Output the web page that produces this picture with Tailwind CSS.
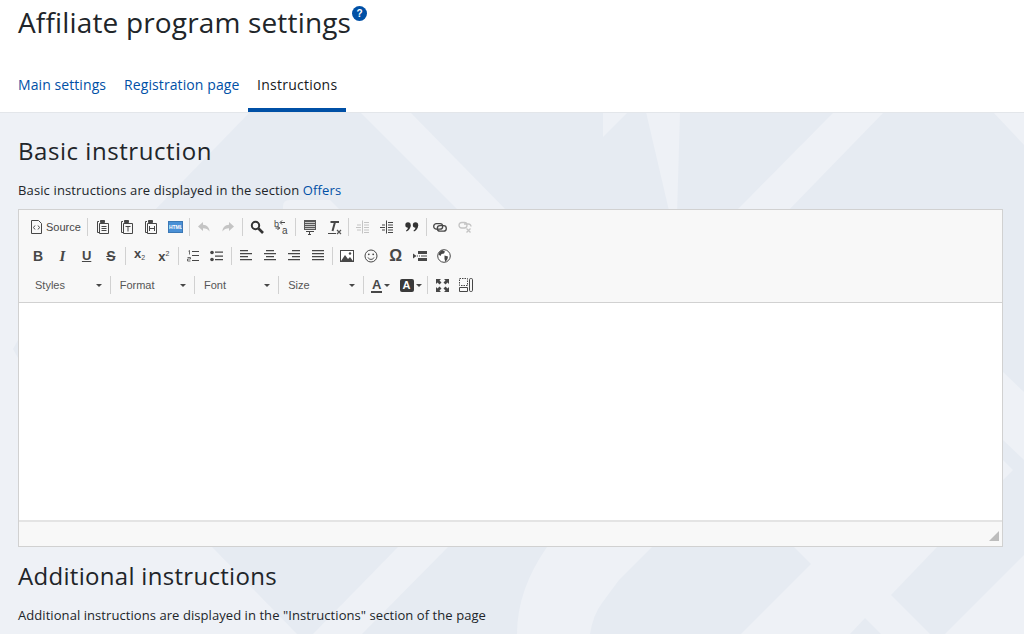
<!DOCTYPE html>
<html lang="en">
<head>
<meta charset="utf-8">
<title>Affiliate program settings</title>
<script src="https://cdn.jsdelivr.net/npm/@tailwindcss/browser@4"></script>
</head>
<body class="m-0 overflow-hidden bg-[#eef1f6] font-['Open_Sans',sans-serif] text-[#212529]">
<div class="relative w-[1024px] h-[634px] overflow-hidden">
  <svg class="absolute inset-0" width="1024" height="634" viewBox="0 0 1024 634" fill="#e6ebf2">
    <polygon points="250,112 360,112 463,215 150,215"/>
    <path d="M283 215V206Q283 200 290 200L330 200L345 215Z" fill="#eef1f6"/>
    <polygon points="410,112 603,112 603,137 628,112 646,112 670,215 511,215"/>
    <polygon points="680,112 834,112 732,215 677,215"/>
    <polygon points="884,112 993,112 1024,145 1024,392 1003,372 1003,215 784,215"/>
    <polygon points="1003,440 1024,460 1024,547 1003,547 1003,480 1013,470 1003,460"/>
    <polygon points="18,340 13,349 18,358"/>
    <polygon points="212,547 398,547 313,634 297,634"/>
    <path d="M448 547H547Q517 590 517 634H362Z"/>
    <path d="M652 547H794L811 564L741 634H590Q593 615 602 603L619 580Z"/>
    <polygon points="850,634 865,618 881,634"/>
    <polygon points="937,547 891,595 930,634 945,634 1024,555 1024,547"/>
  </svg>

  <div class="relative flex flex-col">
    <header class="h-[113px] bg-white border-b border-[#e3e6ea] flex flex-col">
      <div class="h-[68px] pl-[18px] flex items-start">
        <h1 class="text-[28px] leading-[44px] font-normal tracking-[0.16px] text-[#212529]">Affiliate program settings</h1>
        <span class="mt-[6px] ml-px w-[15px] h-[15px] rounded-full bg-[#0050a6] text-white text-[10px] leading-[15px] font-bold text-center font-['Liberation_Sans',sans-serif]">?</span>
      </div>
      <nav class="flex h-[44px] pl-[18px] text-[14px] leading-[20px]">
        <a class="w-[97px] pt-[7px] tracking-[0.08px] text-[#0050a6]">Main settings</a>
        <a class="w-[133px] pl-[9px] pt-[7px] tracking-[0.1px] text-[#0050a6]">Registration page</a>
        <a class="w-[98px] h-[44px] pl-[9px] pt-[7px] tracking-[0.25px] text-[#16191c] border-b-[4px] border-[#0050a6]">Instructions</a>
      </nav>
    </header>

    <main class="px-[18px] flex flex-col">
      <h2 class="mt-[20px] text-[24px] leading-[36px] font-normal tracking-[0.55px]">Basic instruction</h2>
      <p class="mt-[11px] text-[13px] leading-[20px] tracking-[0.13px]">Basic instructions are displayed in the section <a class="text-[#0050a6]">Offers</a></p>

      <section class="mt-[9px] w-[985px] h-[338px] border border-[#d1d1d1] flex flex-col bg-[#f8f8f8] font-['Liberation_Sans',sans-serif]">
        <div class="h-[93px] border-b border-[#d1d1d1] pl-[7px] pt-[3px] text-[#474747]">
          <!-- row 1 -->
          <div class="flex items-center h-[28px]">
            <div class="w-[59px] h-6 flex items-center pl-[4px] gap-[2px] text-[11px] text-[#474747]">
              <svg width="13" height="14" viewBox="0 0 13 14" fill="none" stroke="#474747"><path d="M1.500.5h7l3 3v10h-10z"/><path d="M5 5.500 3.500 7.500 5 9.500M8 5.500 9.500 7.500 8 9.500" stroke-width="1"/></svg>
              <span class="ml-[1px]">Source</span>
            </div>
            <div class="w-[5.5px] flex justify-center"><i class="block w-px h-[18px] bg-[#d1d1d1]"></i></div>
            <div class="w-[24.25px] flex justify-center"><svg width="14" height="16" viewBox="0 0 14 16" fill="none" stroke="#474747"><path d="M3 2.500H1.500V13.500H3"/><path d="M4.500 1.500h4v2h-4z" fill="#474747"/><path d="M3.500 4.500h9v10h-9z"/><path d="M5.500 7.500h5M5.500 9.500h5M5.500 11.500h5"/></svg></div>
            <div class="w-[24.25px] flex justify-center"><svg width="14" height="16" viewBox="0 0 14 16" fill="none" stroke="#474747"><path d="M3 2.500H1.500V13.500H3"/><path d="M4.500 1.500h4v2h-4z" fill="#474747"/><path d="M3.500 4.500h9v10h-9z"/><path d="M5.500 7.500h5M8 7.500v5"/></svg></div>
            <div class="w-[24.25px] flex justify-center"><svg width="14" height="16" viewBox="0 0 14 16" fill="none" stroke="#474747"><path d="M3 2.500H1.500V13.500H3"/><path d="M4.500 1.500h4v2h-4z" fill="#474747"/><path d="M3.500 4.500h9v10h-9z"/><path d="M5.500 7v5M10.500 7v5M5.500 9.500h5"/></svg></div>
            <div class="w-[24.25px] flex justify-center"><div class="w-[15px] h-[12px] bg-[#4a90d6] border border-[#3b78b5] text-white text-[5px] leading-[10px] font-bold text-center overflow-hidden">HTML</div></div>
            <div class="w-[4.5px] flex justify-center"><i class="block w-px h-[18px] bg-[#d1d1d1]"></i></div>
            <div class="w-[24.25px] flex justify-center"><svg width="14" height="12" viewBox="0 0 14 12" fill="#c4c4c4"><path d="M6 1 1 5.500 6 10V7.200C9 7.200 11 8 12.500 10.500 12.500 6.500 10 3.800 6 3.700z"/></svg></div>
            <div class="w-[24.25px] flex justify-center"><svg width="14" height="12" viewBox="0 0 14 12" fill="#c4c4c4"><path d="M8 1 13 5.500 8 10V7.200C5 7.200 3 8 1.500 10.500 1.500 6.500 4 3.800 8 3.700z"/></svg></div>
            <div class="w-[4.5px] flex justify-center"><i class="block w-px h-[18px] bg-[#d1d1d1]"></i></div>
            <div class="w-[24.25px] flex justify-center"><svg width="14" height="14" viewBox="0 0 14 14" fill="none" stroke="#333"><circle cx="5.500" cy="5.500" r="3.700" stroke-width="2"/><path d="M8.500 8.500 13 13" stroke-width="2.600"/></svg></div>
            <div class="w-[24.25px] flex justify-center"><svg width="16" height="16" viewBox="0 0 16 16" fill="none" stroke="#474747"><text x="1" y="7.500" font-size="9" font-family="Liberation Sans" fill="#474747" stroke="none">b</text><path d="M7.500 3.500H12M9 1.500 7 3.500 9 5.500"/><path d="M7 9H2.500M4.500 7 6.500 9 4.500 11"/><text x="9" y="14.500" font-size="10" font-family="Liberation Sans" fill="#474747" stroke="none">a</text></svg></div>
            <div class="w-[4.5px] flex justify-center"><i class="block w-px h-[18px] bg-[#d1d1d1]"></i></div>
            <div class="w-[24.25px] flex justify-center"><svg width="14" height="16" viewBox="0 0 14 16"><rect x="1" y="1" width="12" height="10" fill="#595959"/><path d="M2 3.500h10M2 5.500h10M2 7.500h10M2 9.500h10" stroke="#c9c9c9"/><path d="M3 12.500h8" stroke="#474747"/><path d="M6.500 12v3M5 15.500h3" stroke="#474747"/></svg></div>
            <div class="w-[24.25px] flex justify-center"><svg width="15" height="15" viewBox="0 0 15 15" fill="none"><path d="M3.500 2h8.500M8 2 5.500 11" stroke="#474747" stroke-width="2"/><path d="M1 13.500h8" stroke="#474747"/><path d="M10 10l4 4M14 10l-4 4" stroke="#555" stroke-width="1.200"/></svg></div>
            <div class="w-[4.5px] flex justify-center"><i class="block w-px h-[18px] bg-[#d1d1d1]"></i></div>
            <div class="w-[24.25px] flex justify-center"><svg width="14" height="14" viewBox="0 0 14 14" fill="none" stroke="#c4c4c4"><path d="M6.500 .5v13M8 2.500h5M8 5h5M8 7.500h5M8 10h5M8 12.500h5M1 5h4M0 7.500h5M1 10h4"/></svg></div>
            <div class="w-[24.25px] flex justify-center"><svg width="14" height="14" viewBox="0 0 14 14" fill="none" stroke="#474747"><path d="M6.500 .5v13M8 2.500h5M8 5h5M8 7.500h5M8 10h5M8 12.500h5M2 5h3M0 7.500h5M2 10h3"/></svg></div>
            <div class="w-[24.25px] flex justify-center"><svg width="14" height="10" viewBox="0 0 14 10" fill="#333"><circle cx="3" cy="3" r="2.700"/><path d="M5.700 3C5.700 6 4 8.500 1.500 9.500L1 8.500C2.500 7.500 3 6.500 3 5z"/><circle cx="10.500" cy="3" r="2.700"/><path d="M13.200 3C13.200 6 11.500 8.500 9 9.500L8.500 8.500C10 7.500 10.500 6.500 10.500 5z"/></svg></div>
            <div class="w-[4.5px] flex justify-center"><i class="block w-px h-[18px] bg-[#d1d1d1]"></i></div>
            <div class="w-[24.25px] flex justify-center"><svg width="14" height="9" viewBox="0 0 14 9" fill="none" stroke="#474747" stroke-width="1.300"><rect x=".7" y=".7" width="9" height="5.500" rx="2.700"/><rect x="4.300" y="2.700" width="9" height="5.500" rx="2.700"/></svg></div>
            <div class="w-[24.25px] flex justify-center"><svg width="14" height="12" viewBox="0 0 14 12" fill="none" stroke="#c4c4c4" stroke-width="1.300"><rect x="1" y="1.500" width="8" height="5.500" rx="2.700"/><path d="M6 3H10.500A2.500 2.500 0 0 1 13 5.500"/><path d="M8.500 7.500l4 4M12.500 7.500l-4 4"/></svg></div>
          </div>
          <!-- row 2 -->
          <div class="flex items-center h-[29px]">
            <div class="w-[24.25px] text-center text-[14px] leading-6 font-bold text-[#474747]">B</div>
            <div class="w-[24.25px] text-center text-[15px] leading-6 font-bold italic font-['Liberation_Serif',serif] text-[#474747]">I</div>
            <div class="w-[24.25px] text-center text-[13px] leading-[18px] font-bold underline text-[#474747]">U</div>
            <div class="w-[24.25px] text-center text-[14px] leading-6 font-bold line-through text-[#474747]">S</div>
            <div class="w-[4.5px] flex justify-center"><i class="block w-px h-[18px] bg-[#d1d1d1]"></i></div>
            <div class="w-[24.25px] text-center text-[13px] leading-6 font-bold text-[#474747]">x<span class="text-[7px] font-normal align-[-2px]">2</span></div>
            <div class="w-[24.25px] text-center text-[13px] leading-6 font-bold text-[#474747]">x<span class="text-[7px] font-normal align-[5px]">2</span></div>
            <div class="w-[4.5px] flex justify-center"><i class="block w-px h-[18px] bg-[#d1d1d1]"></i></div>
            <div class="w-[24.25px] flex justify-center"><svg width="12" height="12" viewBox="0 0 12 12" fill="none" stroke="#474747"><path d="M2.500 .5v4M1.500 1.200 2.500 .5M.5 7.500h3v1.500h-3v2h3" stroke-width=".8"/><path d="M5 1.500h7M5 5.500h7M5 10.500h7"/></svg></div>
            <div class="w-[24.25px] flex justify-center"><svg width="13" height="12" viewBox="0 0 13 12" fill="#474747"><circle cx="2" cy="2.500" r="1.800"/><circle cx="2" cy="9.500" r="1.800"/><path d="M5 1.500h8v1.200H5zM5 5.500h8v1.200H5zM5 9h8v1.200H5z"/></svg></div>
            <div class="w-[4.5px] flex justify-center"><i class="block w-px h-[18px] bg-[#d1d1d1]"></i></div>
            <div class="w-[24.25px] flex justify-center"><svg width="12" height="11" viewBox="0 0 12 11" fill="#474747"><path d="M0 0h8v1.300H0zM0 3h12v1.300H0zM0 6h8v1.300H0zM0 9h12v1.300H0z"/></svg></div>
            <div class="w-[24.25px] flex justify-center"><svg width="12" height="11" viewBox="0 0 12 11" fill="#474747"><path d="M2 0h8v1.300H2zM0 3h12v1.300H0zM2 6h8v1.300H2zM0 9h12v1.300H0z"/></svg></div>
            <div class="w-[24.25px] flex justify-center"><svg width="12" height="11" viewBox="0 0 12 11" fill="#474747"><path d="M4 0h8v1.300H4zM0 3h12v1.300H0zM4 6h8v1.300H4zM0 9h12v1.300H0z"/></svg></div>
            <div class="w-[24.25px] flex justify-center"><svg width="12" height="11" viewBox="0 0 12 11" fill="#474747"><path d="M0 0h12v1.300H0zM0 3h12v1.300H0zM0 6h12v1.300H0zM0 9h12v1.300H0z"/></svg></div>
            <div class="w-[4.5px] flex justify-center"><i class="block w-px h-[18px] bg-[#d1d1d1]"></i></div>
            <div class="w-[24.25px] flex justify-center"><svg width="14" height="12" viewBox="0 0 14 12"><rect x=".5" y=".5" width="13" height="11" fill="#fff" stroke="#474747"/><path d="M1 11 5 5l3 4 2-2 3 4z" fill="#474747"/><circle cx="10" cy="3.500" r="1.200" fill="#474747"/></svg></div>
            <div class="w-[24.25px] flex justify-center"><svg width="14" height="14" viewBox="0 0 14 14" fill="none" stroke="#474747"><circle cx="7" cy="7" r="6"/><circle cx="4.800" cy="5.300" r=".9" fill="#474747" stroke="none"/><circle cx="9.200" cy="5.300" r=".9" fill="#474747" stroke="none"/><path d="M4 8.500C5 11 9 11 10 8.500"/></svg></div>
            <div class="w-[24.25px] text-center text-[16px] leading-6 font-bold text-[#474747]">&#937;</div>
            <div class="w-[24.25px] flex justify-center"><svg width="14" height="10" viewBox="0 0 14 10" fill="#474747"><path d="M0 2.500 3.500 5 0 7.500z"/><path d="M4 4.500h1v1H4zM6 4.500h1v1H6z"/><rect x="5" y="0" width="9" height="3"/><rect x="5" y="7" width="9" height="3"/><path d="M8 4.500h6v1H8z"/></svg></div>
            <div class="w-[24.25px] flex justify-center"><svg width="14" height="14" viewBox="0 0 14 14"><circle cx="7" cy="7" r="6.300" fill="#fff" stroke="#474747"/><path d="M5 1 8 2.500 7 4.500 4.500 5 3.500 7 1.500 5.500 2.500 3zM7.500 6.500 11 7.500 10.500 10 8.500 13 7.500 10z" fill="#474747"/></svg></div>
          </div>
          <!-- row 3 -->
          <div class="flex items-center h-[30px] text-[11px] text-[#555]">
            <div class="w-[81.7px] flex justify-between items-center pl-[9px] pr-[6px]"><span>Styles</span><i class="block w-0 h-0 border-x-[3px] border-x-transparent border-t-[3px] border-t-[#474747]"></i></div>
            <div class="w-[5px] flex justify-center"><i class="block w-px h-[18px] bg-[#d1d1d1]"></i></div>
            <div class="w-[79.3px] flex justify-between items-center pl-[7px] pr-[6px]"><span>Format</span><i class="block w-0 h-0 border-x-[3px] border-x-transparent border-t-[3px] border-t-[#474747]"></i></div>
            <div class="w-[5px] flex justify-center"><i class="block w-px h-[18px] bg-[#d1d1d1]"></i></div>
            <div class="w-[79.3px] flex justify-between items-center pl-[7px] pr-[6px]"><span>Font</span><i class="block w-0 h-0 border-x-[3px] border-x-transparent border-t-[3px] border-t-[#474747]"></i></div>
            <div class="w-[5px] flex justify-center"><i class="block w-px h-[18px] bg-[#d1d1d1]"></i></div>
            <div class="w-[79.3px] flex justify-between items-center pl-[7px] pr-[6px]"><span>Size</span><i class="block w-0 h-0 border-x-[3px] border-x-transparent border-t-[3px] border-t-[#474747]"></i></div>
            <div class="w-[5px] flex justify-center"><i class="block w-px h-[18px] bg-[#d1d1d1]"></i></div>
            <div class="w-[30px] flex items-center justify-center gap-[2px]">
              <span class="text-[13px] leading-[13px] font-bold text-[#474747] border-b-2 border-[#474747] px-[1px]">A</span>
              <i class="block w-0 h-0 border-x-[3px] border-x-transparent border-t-[3px] border-t-[#474747]"></i>
            </div>
            <div class="w-[30px] flex items-center justify-center gap-[2px]">
              <span class="w-[14px] h-[13px] rounded-[2px] bg-[#3a3a3a] text-white text-[11px] leading-[13px] font-bold text-center">A</span>
              <i class="block w-0 h-0 border-x-[3px] border-x-transparent border-t-[3px] border-t-[#474747]"></i>
            </div>
            <div class="w-[4.5px] flex justify-center"><i class="block w-px h-[18px] bg-[#d1d1d1]"></i></div>
            <div class="w-[24.25px] flex justify-center"><svg width="13" height="13" viewBox="0 0 13 13" fill="#474747"><path d="M0 0h5L3.500 1.500 5.500 3.500 3.500 5.500 1.500 3.500 0 5zM13 0v5L11.500 3.500 9.500 5.500 7.500 3.500 9.500 1.500 8 0zM0 13V8L1.500 9.500 3.500 7.500 5.500 9.500 3.500 11.500 5 13zM13 13H8L9.500 11.500 7.500 9.500 9.500 7.500 11.500 9.500 13 8z"/></svg></div>
            <div class="w-[24.25px] flex justify-center"><svg width="14" height="14" viewBox="0 0 14 14" fill="none" stroke="#474747"><path d="M.5 .5h8v7h-8z" stroke-dasharray="1.500 1"/><path d="M.5 9.500h8v4h-8z"/><rect x="10.500" y=".5" width="3" height="13" rx="1.200"/></svg></div>
          </div>
        </div>
        <div class="h-[217px] bg-white"></div>
        <div class="relative flex-1 border-t-2 border-[#e4e4e4]">
          <svg class="absolute right-[3px] bottom-[5px]" width="10" height="10" viewBox="0 0 10 10" fill="#bdbdbd"><path d="M10 0V10H0z"/></svg>
        </div>
      </section>

      <h2 class="mt-[11px] text-[24px] leading-[36px] font-normal tracking-[0.3px]">Additional instructions</h2>
      <p class="mt-[11px] text-[13px] leading-[20px] tracking-[0.065px]">Additional instructions are displayed in the "Instructions" section of the page</p>
    </main>
  </div>
</div>
</body>
</html>
